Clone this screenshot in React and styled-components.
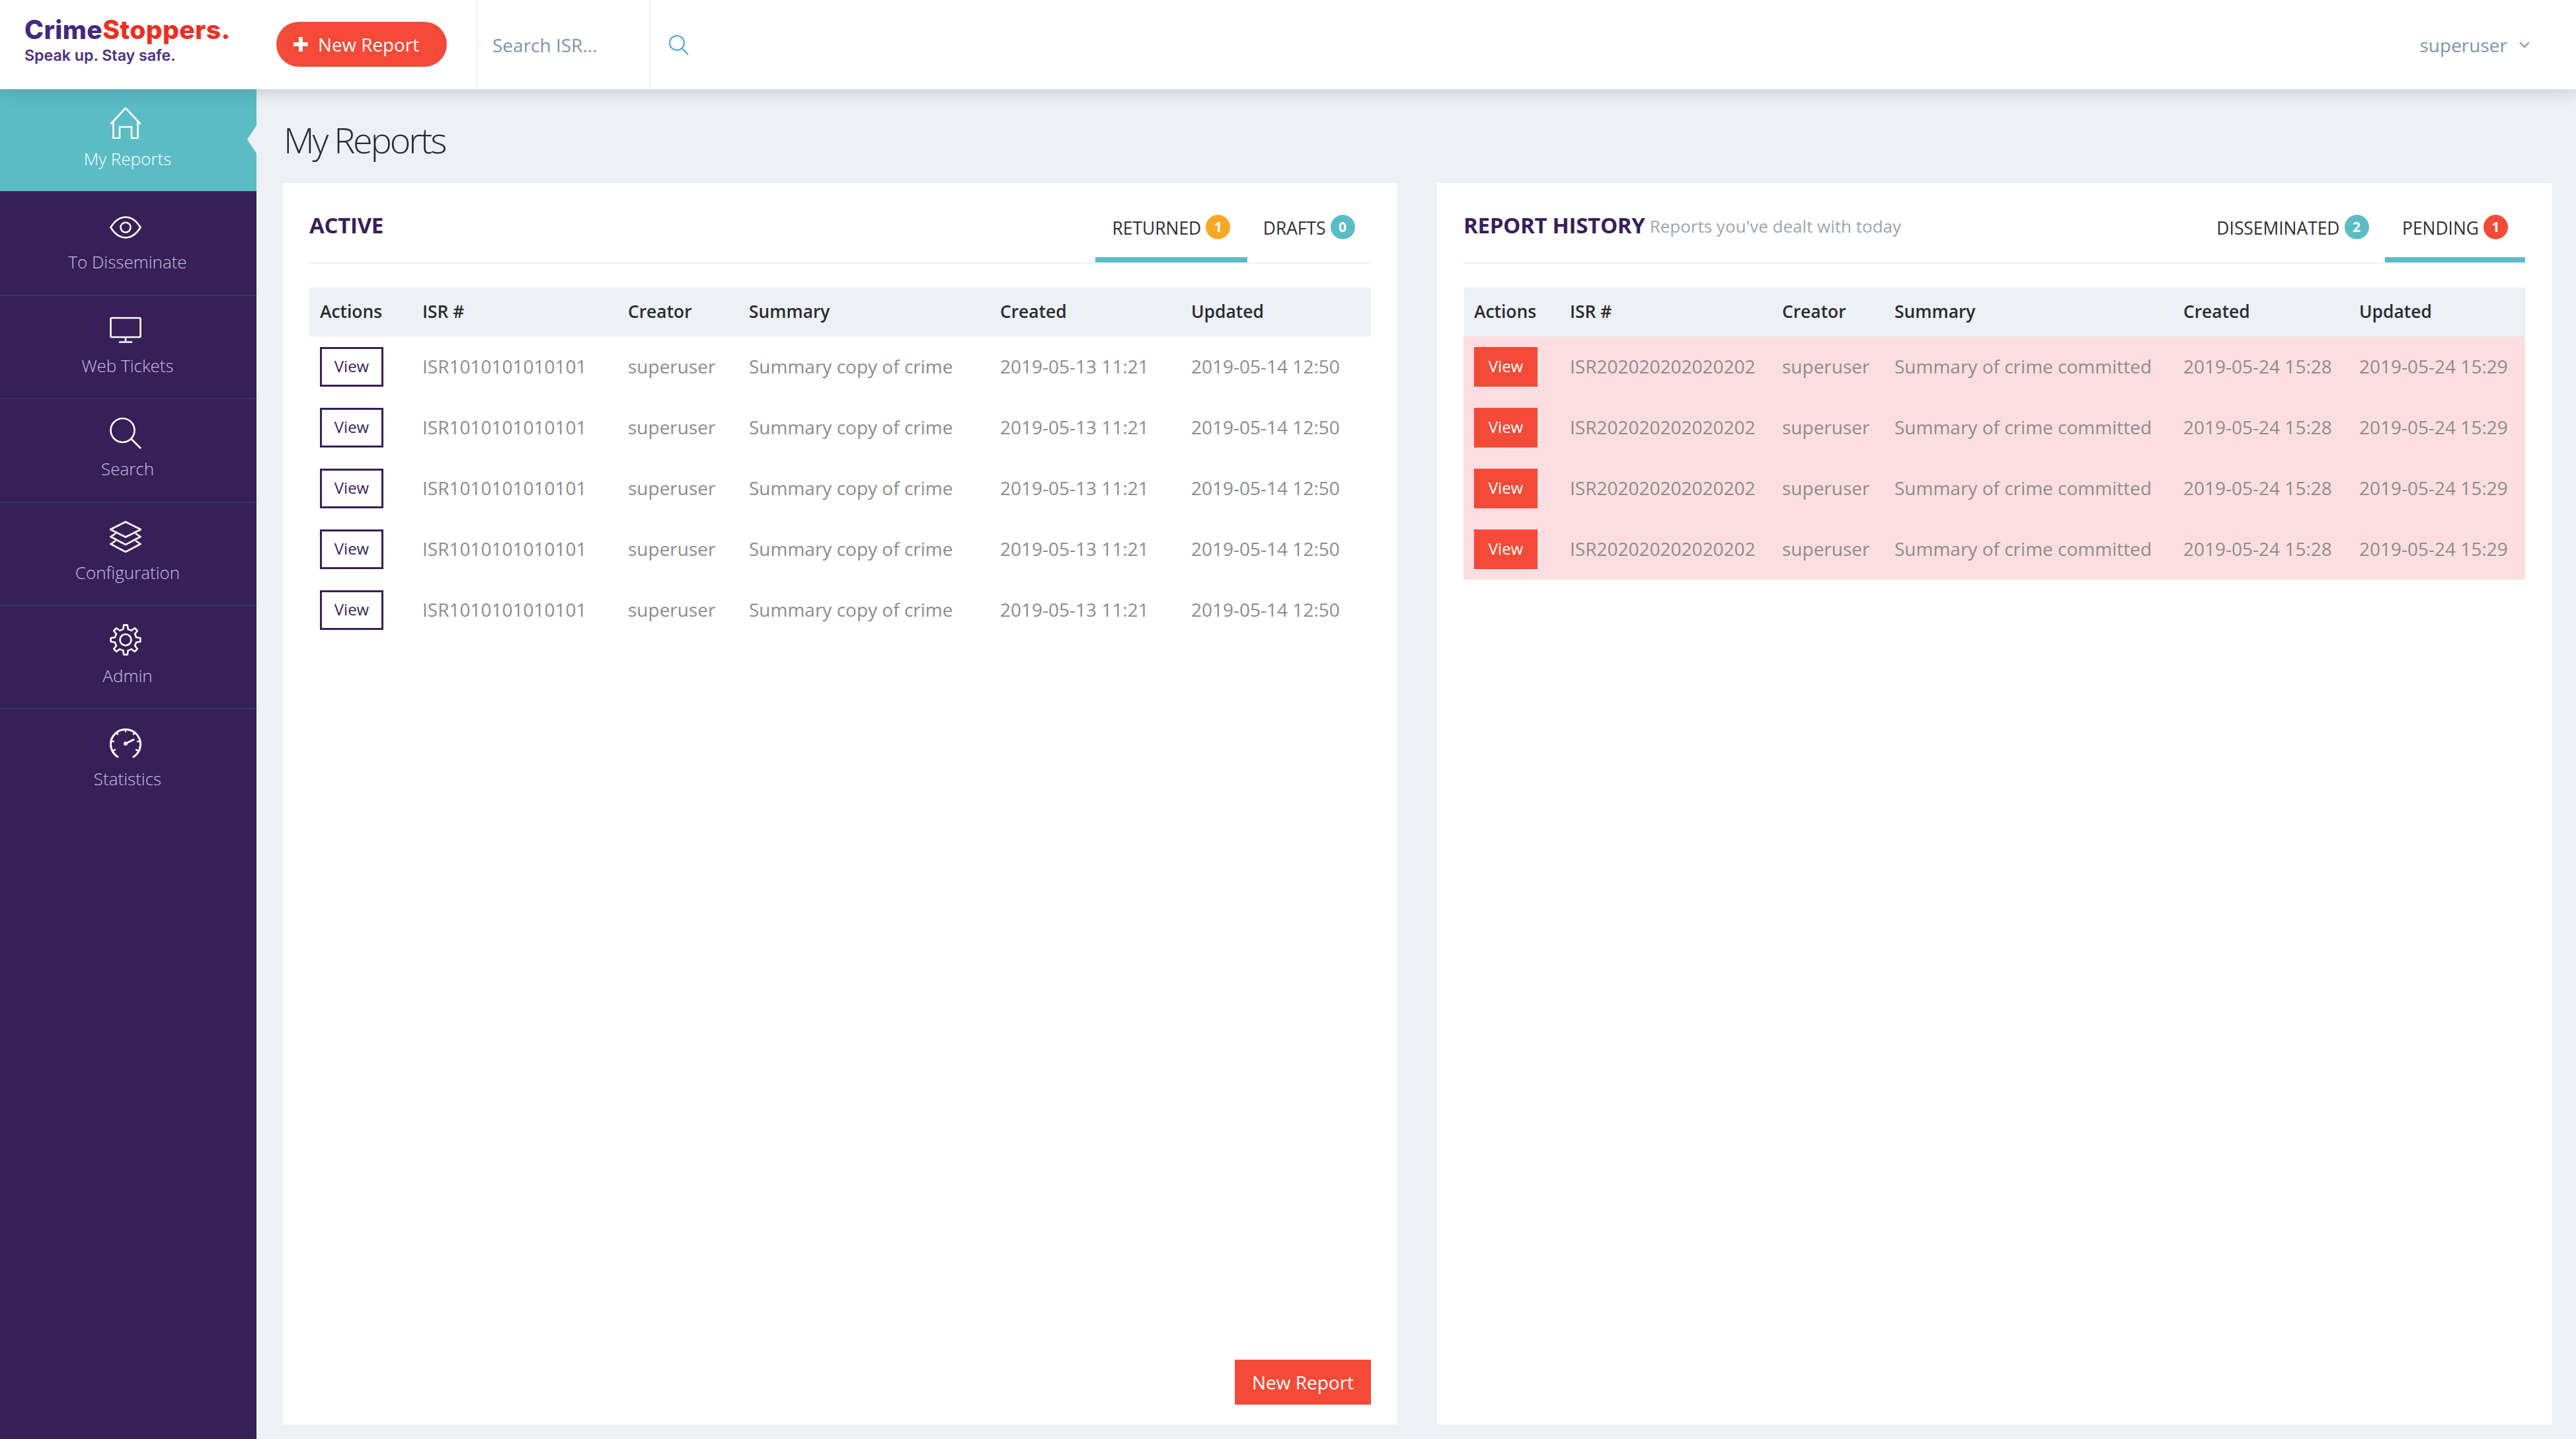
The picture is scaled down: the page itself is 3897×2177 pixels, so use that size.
import React from "react";
import styled, { createGlobalStyle } from "styled-components";

const PURPLE = "#371f58";
const TEAL = "#5bbcc6";
const RED = "#f44a37";
const SLATE = "#7d94ad";

const Global = createGlobalStyle`
  html, body { margin: 0; padding: 0; height: 100%; background: #edf0f5; }
  #root { height: 100vh; }
  * { box-sizing: border-box; }
  body { font-family: "Open Sans", "Noto Sans", sans-serif; overflow: hidden; }
`;

const Page = styled.div`
  height: 100vh;
  display: flex;
  flex-direction: column;
`;

const TopBar = styled.header`
  height: 135px;
  flex: none;
  background: #fff;
  display: flex;
  align-items: stretch;
  position: relative;
  z-index: 2;
  box-shadow: 0 4px 24px rgba(40, 50, 80, 0.2);
`;

const Logo = styled.div`
  width: 418px;
  flex: none;
  padding: 23px 0 0 37px;
`;

const LogoMark = styled.div`
  font-family: Inter, sans-serif;
  font-weight: 800;
  font-size: 39px;
  line-height: 44px;
  letter-spacing: 0.39px;
  color: #44287e;
`;

const LogoRed = styled.span`
  color: #ee2e24;
`;

const LogoTag = styled.div`
  font-family: Inter, sans-serif;
  font-weight: 600;
  font-size: 23.2px;
  line-height: 28px;
  margin-top: 3px;
  color: #4a2e86;
`;

const PillButton = styled.button`
  width: 258px;
  height: 68px;
  margin: 33px 45px 0 0;
  flex: none;
  border: 0;
  border-radius: 34px;
  background: ${RED};
  color: #fff;
  font: 400 27.8px "Open Sans", sans-serif;
  display: flex;
  align-items: center;
  padding: 0 0 0 26px;
  gap: 15px;
`;

const SearchField = styled.div`
  width: 263px;
  flex: none;
  border-left: 2px solid #eef0f3;
  border-right: 2px solid #eef0f3;
  padding-left: 22px;
  display: flex;
  align-items: center;
  font-size: 28px;
  color: ${SLATE};
`;

const SearchButton = styled.div`
  display: flex;
  align-items: center;
  padding-left: 28px;
  color: #4aa5dc;
`;

const UserMenu = styled.div`
  margin-left: auto;
  display: flex;
  align-items: center;
  gap: 18px;
  padding-right: 70px;
  font-size: 28px;
  color: ${SLATE};
`;

const Body = styled.div`
  flex: 1;
  min-height: 0;
  display: flex;
`;

const Sidebar = styled.nav`
  width: 388px;
  flex: none;
  background: ${PURPLE};
`;

const NavItem = styled.div`
  position: relative;
  height: 156.4px;
  padding: 27px 2px 0 0;
  display: flex;
  flex-direction: column;
  align-items: center;
  background: ${(p) => (p.$active ? TEAL : "transparent")};
  border-bottom: 2px solid ${(p) => (p.$active ? "#2a3a58" : "#33375c")};
  color: ${(p) => (p.$active ? "#fff" : "#c2c2e0")};
  &:last-child {
    border-bottom: 0;
  }
`;

const NavIcon = styled.span`
  display: block;
  width: 48px;
  height: 48px;
  margin-right: 6px;
  color: #fff;
`;

const NavLabel = styled.span`
  font-weight: 300;
  font-size: 26px;
  line-height: 36px;
  margin-top: 12px;
`;

const Notch = styled.span`
  position: absolute;
  right: 0;
  top: 55px;
  width: 14px;
  height: 42px;
  background: #edf0f5;
  clip-path: polygon(100% 0, 0 50%, 100% 100%);
`;

const Main = styled.main`
  flex: 1;
  min-width: 0;
  padding: 0 37px 22px 40px;
  display: flex;
  flex-direction: column;
`;

const Title = styled.h1`
  height: 142px;
  flex: none;
  margin: 0;
  padding: 9px 0 0 1px;
  display: flex;
  align-items: center;
  font-weight: 300;
  font-size: 54px;
  letter-spacing: -3.1px;
  color: #2b2b2f;
`;

const Panels = styled.div`
  flex: 1;
  min-height: 0;
  display: flex;
  gap: 60px;
`;

const Panel = styled.section`
  flex: 1;
  min-width: 0;
  background: #fff;
  padding: 0 40px 30px;
  display: flex;
  flex-direction: column;
`;

const PanelHead = styled.div`
  height: 122px;
  flex: none;
  display: flex;
  border-bottom: 2px solid #eff0f2;
  margin-bottom: 36px;
`;

const Heading = styled.div`
  flex: 1;
  display: flex;
  align-items: center;
  gap: 7px;
  padding-top: 9px;
  padding-bottom: 2px;
`;

const HeadingText = styled.h2`
  margin: 0;
  font-weight: 700;
  font-size: 33px;
  letter-spacing: -0.3px;
  color: ${PURPLE};
`;

const Subtitle = styled.span`
  font-size: 26px;
  color: #9aa6b2;
  padding-top: 3px;
`;

const Tab = styled.div`
  height: 120px;
  padding: 24px ${(p) => (p.$active ? 26 : 24.5)}px 0 ${(p) => (p.$active ? 26 : 23.5)}px;
  border-bottom: 8px solid ${(p) => (p.$active ? TEAL : "transparent")};
  display: flex;
  align-items: center;
  gap: 7px;
  font-size: 26.4px;
  color: #2e2e33;
`;

const Badge = styled.span`
  width: 37px;
  height: 37px;
  margin-bottom: 4px;
  border-radius: 50%;
  background: ${(p) => p.$color};
  color: #fff;
  font-weight: 700;
  font-size: 21px;
  display: flex;
  align-items: center;
  justify-content: center;
`;

const Row = styled.div`
  display: grid;
  grid-template-columns: ${(p) => p.$cols};
  align-items: center;
  height: ${(p) => (p.$head ? 74 : 92)}px;
  background: ${(p) => (p.$head ? "#edf0f5" : p.$alert ? "#fcdee2" : "transparent")};
`;

const HeadCell = styled.div`
  padding: 0 0 3px 16px;
  font-weight: 600;
  font-size: 26.4px;
  color: #2b2b2f;
  white-space: nowrap;
`;

const Cell = styled.div`
  padding: 0 0 ${(p) => (p.$action ? 0 : 2)}px 16px;
  font-size: 28px;
  color: #8c8c8c;
  white-space: nowrap;
`;

const ViewButton = styled.button`
  display: block;
  width: 96px;
  height: 60px;
  padding: 0 0 3px;
  border: 3px solid ${(p) => (p.$alert ? RED : PURPLE)};
  background: ${(p) => (p.$alert ? RED : "#fff")};
  color: ${(p) => (p.$alert ? "#fff" : PURPLE)};
  font: 400 24px "Open Sans", sans-serif;
`;

const Footer = styled.div`
  margin-top: auto;
  display: flex;
  justify-content: flex-end;
`;

const NewReport = styled.button`
  width: 206px;
  height: 68px;
  padding: 0;
  border: 0;
  background: ${RED};
  color: #fff;
  font: 400 28px "Open Sans", sans-serif;
`;

const Icon = ({ children, sw = 2.6 }) => (
  <svg width="48" height="48" viewBox="0 0 48 48" fill="none" stroke="currentColor" strokeWidth={sw}>
    {children}
  </svg>
);

const gearPath = (() => {
  const pt = (r, deg) => {
    const a = ((deg - 90) * Math.PI) / 180;
    return `${(24 + r * Math.cos(a)).toFixed(2)} ${(24 + r * Math.sin(a)).toFixed(2)}`;
  };
  let d = "";
  for (let i = 0; i < 8; i++) {
    const c = i * 45;
    d += `${i ? "L" : "M"}${pt(16.5, c - 13)} L${pt(22.5, c - 7)} L${pt(22.5, c + 7)} L${pt(16.5, c + 13)} `;
    d += `A16.5 16.5 0 0 1 ${pt(16.5, c + 32)} `;
  }
  return d + "Z";
})();

const gaugeTicks = [-120, -80, -40, 0, 40, 80, 120].map((deg) => {
  const a = ((deg - 90) * Math.PI) / 180;
  return [24 + 22 * Math.cos(a), 25 + 22 * Math.sin(a), 24 + 17.5 * Math.cos(a), 25 + 17.5 * Math.sin(a)];
});

const icons = {
  home: (
    <Icon>
      <path d="M1.5 25.5 24 1.5l22.5 24" />
      <path d="M5.5 21v26h9.5V30h18v17h9.5V21" />
    </Icon>
  ),
  eye: (
    <Icon>
      <path d="M1.5 26C8 15.5 16 10.5 24 10.5S40 15.5 46.5 26C40 36.5 32 41.5 24 41.5S8 36.5 1.5 26Z" />
      <circle cx="24" cy="26" r="7.5" />
    </Icon>
  ),
  monitor: (
    <Icon>
      <rect x="1.5" y="6" width="45" height="29" rx="1.5" />
      <path d="M24 35v7M14 42.5h20" />
    </Icon>
  ),
  search: (
    <Icon>
      <circle cx="19.5" cy="20" r="18" />
      <path d="M32.5 33 47 47.5" />
    </Icon>
  ),
  layers: (
    <Icon>
      <path d="M24 1.5 47 13 24 24.5 1 13Z" strokeLinejoin="round" />
      <path d="M9 19 1.5 24 24 36l22.5-12-7.5-5" />
      <path d="M9 30 1.5 35 24 47l22.5-12-7.5-5" />
    </Icon>
  ),
  gear: (
    <Icon>
      <path d={gearPath} strokeLinejoin="round" />
      <circle cx="24" cy="24" r="8.5" />
    </Icon>
  ),
  gauge: (
    <Icon sw={3}>
      <path d="M12 45A22.5 22.5 0 1 1 36 45" strokeLinecap="round" />
      {gaugeTicks.map(([x1, y1, x2, y2], i) => (
        <line key={i} x1={x1} y1={y1} x2={x2} y2={y2} strokeWidth="2.4" />
      ))}
      <path d="M24 25 36 19" strokeWidth="3" strokeLinecap="round" />
      <circle cx="24" cy="25" r="3" fill="currentColor" stroke="none" />
    </Icon>
  ),
};

const nav = [
  ["home", "My Reports"],
  ["eye", "To Disseminate"],
  ["monitor", "Web Tickets"],
  ["search", "Search"],
  ["layers", "Configuration"],
  ["gear", "Admin"],
  ["gauge", "Statistics"],
];

const headers = ["Actions", "ISR #", "Creator", "Summary", "Created", "Updated"];
const LEFT_COLS = "155px 311px 183px 380px 289px 288px";
const RIGHT_COLS = "145px 321px 170px 437px 266px 267px";

const leftRows = Array(5).fill(["ISR1010101010101", "superuser", "Summary copy of crime", "2019-05-13 11:21", "2019-05-14 12:50"]);
const rightRows = Array(4).fill(["ISR202020202020202", "superuser", "Summary of crime committed", "2019-05-24 15:28", "2019-05-24 15:29"]);

const DataTable = ({ cols, rows, alert }) => (
  <div>
    <Row $head $cols={cols}>
      {headers.map((h) => (
        <HeadCell key={h}>{h}</HeadCell>
      ))}
    </Row>
    {rows.map((r, i) => (
      <Row key={i} $cols={cols} $alert={alert}>
        <Cell $action>
          <ViewButton $alert={alert}>View</ViewButton>
        </Cell>
        {r.map((c, j) => (
          <Cell key={j}>{c}</Cell>
        ))}
      </Row>
    ))}
  </div>
);

export default function App() {
  return (
    <Page>
      <Global />
      <TopBar>
        <Logo>
          <LogoMark>
            Crime<LogoRed>Stoppers.</LogoRed>
          </LogoMark>
          <LogoTag>Speak up. Stay safe.</LogoTag>
        </Logo>
        <PillButton>
          <svg width="22" height="22" viewBox="0 0 22 22" fill="none" stroke="#fff" strokeWidth="6">
            <path d="M11 0v22M0 11h22" />
          </svg>
          New Report
        </PillButton>
        <SearchField>Search ISR...</SearchField>
        <SearchButton>
          <svg width="30" height="30" viewBox="0 0 30 30" fill="none" stroke="currentColor" strokeWidth="2">
            <circle cx="12" cy="12" r="11" />
            <path d="M20 20l9 10" />
          </svg>
        </SearchButton>
        <UserMenu>
          superuser
          <svg width="16" height="10" viewBox="0 0 16 10" fill="none" stroke={SLATE} strokeWidth="2">
            <path d="M1 1l7 7 7-7" />
          </svg>
        </UserMenu>
      </TopBar>
      <Body>
        <Sidebar>
          {nav.map(([icon, label], i) => (
            <NavItem key={label} $active={i === 0}>
              <NavIcon>{icons[icon]}</NavIcon>
              <NavLabel>{label}</NavLabel>
              {i === 0 && <Notch />}
            </NavItem>
          ))}
        </Sidebar>
        <Main>
          <Title>My Reports</Title>
          <Panels>
            <Panel>
              <PanelHead>
                <Heading>
                  <HeadingText>ACTIVE</HeadingText>
                </Heading>
                <Tab $active>
                  RETURNED <Badge $color="#f9a825">1</Badge>
                </Tab>
                <Tab>
                  DRAFTS <Badge $color={TEAL}>0</Badge>
                </Tab>
              </PanelHead>
              <DataTable cols={LEFT_COLS} rows={leftRows} />
              <Footer>
                <NewReport>New Report</NewReport>
              </Footer>
            </Panel>
            <Panel>
              <PanelHead>
                <Heading>
                  <HeadingText>REPORT HISTORY</HeadingText>
                  <Subtitle>Reports you've dealt with today</Subtitle>
                </Heading>
                <Tab>
                  DISSEMINATED <Badge $color={TEAL}>2</Badge>
                </Tab>
                <Tab $active>
                  PENDING <Badge $color={RED}>1</Badge>
                </Tab>
              </PanelHead>
              <DataTable cols={RIGHT_COLS} rows={rightRows} alert />
            </Panel>
          </Panels>
        </Main>
      </Body>
    </Page>
  );
}
